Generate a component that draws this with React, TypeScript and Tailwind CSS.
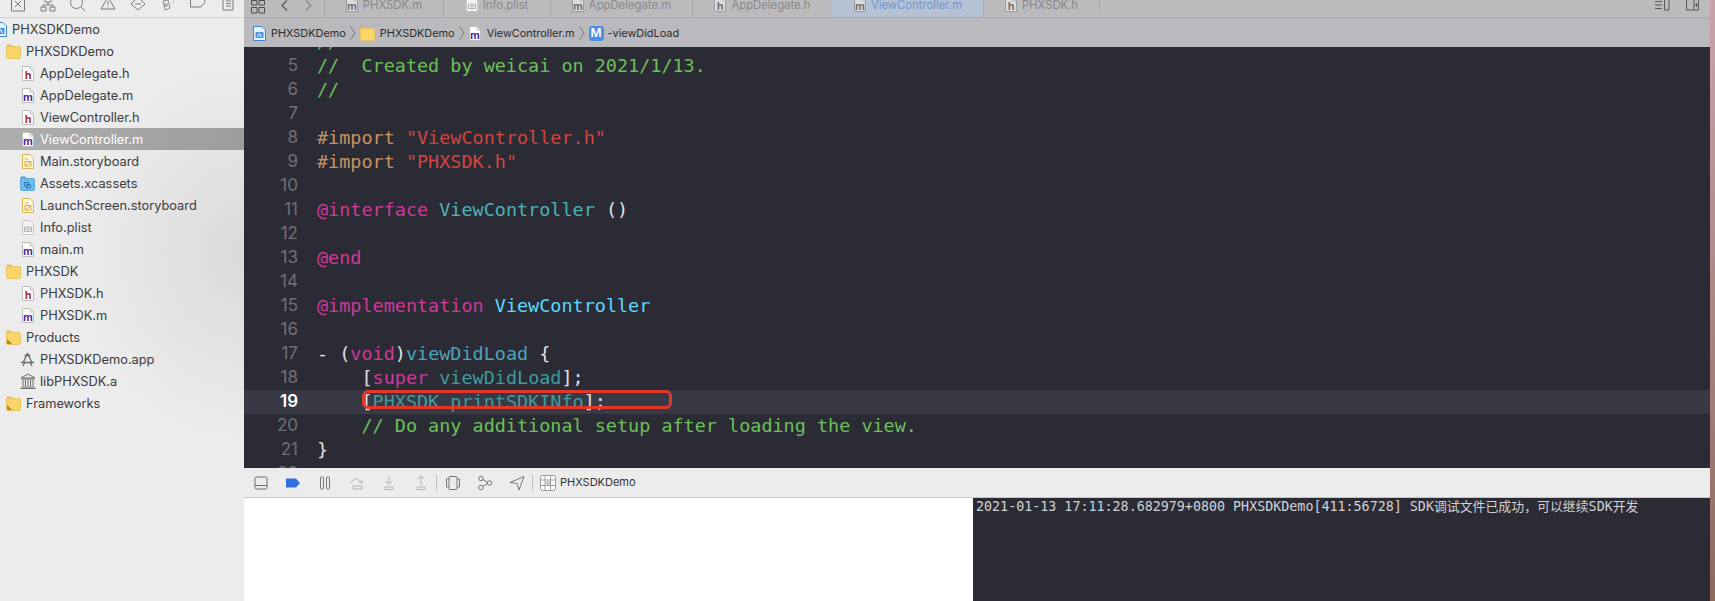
import { ReactNode } from "react";

const sans = "font-['Inter','Noto_Sans',sans-serif]";
const mono = "font-['DejaVu_Sans_Mono','Liberation_Mono',monospace]";

function FileIcon({ letter, dim = false }: { letter: "h" | "m"; dim?: boolean }) {
  const color = dim ? "#6d6d70" : letter === "h" ? "#a3272c" : "#3f2a9b";
  return (
    <svg width="12" height="15" viewBox="0 0 12 15" className="shrink-0">
      <path d="M.5.5H8L11.5 4V14.500H.5Z" fill={dim ? "#dcdcdc" : "#fff"} stroke={dim ? "#9b9b9b" : "#bdbdbd"} />
      <path d="M8 .5V4H11.500" fill="none" stroke="#c4c4c4" />
      <text x="6" y="12.500" textAnchor="middle" fontSize="11" fontWeight="700" fontFamily="Liberation Sans" fill={color}>
        {letter}
      </text>
    </svg>
  );
}

function Storyboard() {
  return (
    <svg width="12" height="15" viewBox="0 0 12 15" className="shrink-0">
      <path d="M.5.5H8L11.500 4V14.500H.5Z" fill="#fdf6df" stroke="#d9b64f" />
      <path d="M3 5h3M3 7.500h6v4.500H3ZM3 12l6-4.500" fill="none" stroke="#e2a92c" />
    </svg>
  );
}

function Plist() {
  return (
    <svg width="12" height="15" viewBox="0 0 12 15" className="shrink-0">
      <path d="M.5.5H8L11.500 4V14.500H.5Z" fill="#f4f4f4" stroke="#c6c6c6" />
      <path d="M2.500 7h7v4.500h-7ZM2.500 9.200h7M6 7v4.500" fill="none" stroke="#b5b5b5" />
    </svg>
  );
}

function Folder({ kind = "plain" }: { kind?: "plain" | "corner" | "blue" }) {
  const fill = kind === "blue" ? "#6cbcec" : "#fbd569";
  const tab = kind === "blue" ? "#4a9fd8" : "#e9b94a";
  return (
    <svg width="15" height="15" viewBox="0 0 15 15" className="shrink-0">
      <path d="M.5 3V1.500Q.5.500 1.500.500H5L6.500 2.500H14V5H.5Z" fill={tab} />
      <rect x=".5" y="2.500" width="14" height="12" rx="1.200" fill={fill} stroke={kind === "blue" ? "#5aa8dc" : "#e5c464"} />
      {kind === "corner" && <path d="M1 14V9L6.500 14Z" fill="#b98a20" />}
      {kind === "blue" && <path d="M4.500 6.500h4v3.500h-4ZM6.500 8.500h4v3.500h-4Z" fill="none" stroke="#1f6fa8" strokeWidth=".8" />}
    </svg>
  );
}

function DocBlue() {
  return (
    <svg width="13" height="15" viewBox="0 0 13 15" className="shrink-0">
      <path d="M.5.500H9L12.500 4V14.500H.5Z" fill="#e6f1fb" stroke="#3f87d6" />
      <path d="M2.500 6h8v6h-8Z" fill="#4c95e0" />
      <path d="M4.500 11L6.500 7.500 8.500 11" fill="none" stroke="#fff" />
    </svg>
  );
}

function AppIcon() {
  return (
    <svg width="15" height="15" viewBox="0 0 15 15" className="shrink-0" fill="none" stroke="#6b6b6d" strokeWidth="1.300">
      <path d="M7.500 1L3 11M7.500 1L12 11M1 10.500h13M3 14l1.500-3M12 14l-1.500-3M4.500 3.500h6" />
    </svg>
  );
}

function Bank() {
  return (
    <svg width="16" height="16" viewBox="0 0 16 16" className="shrink-0" fill="none" stroke="#6b6b6d">
      <path d="M1 5L8 1l7 4ZM1.500 6h13M3 7v6M5.500 7v6M8 7v6M10.500 7v6M13 7v6M1.500 14h13M.5 15.500h15" />
    </svg>
  );
}

type Row = { label: string; indent: number; text: number; icon: ReactNode; selected?: boolean };

const rows: Row[] = [
  { label: "PHXSDKDemo", indent: -6, text: 12, icon: <DocBlue /> },
  { label: "PHXSDKDemo", indent: 6, text: 26, icon: <Folder /> },
  { label: "AppDelegate.h", indent: 22, text: 40, icon: <FileIcon letter="h" /> },
  { label: "AppDelegate.m", indent: 22, text: 40, icon: <FileIcon letter="m" /> },
  { label: "ViewController.h", indent: 22, text: 40, icon: <FileIcon letter="h" /> },
  { label: "ViewController.m", indent: 22, text: 40, icon: <FileIcon letter="m" />, selected: true },
  { label: "Main.storyboard", indent: 22, text: 40, icon: <Storyboard /> },
  { label: "Assets.xcassets", indent: 20, text: 40, icon: <Folder kind="blue" /> },
  { label: "LaunchScreen.storyboard", indent: 22, text: 40, icon: <Storyboard /> },
  { label: "Info.plist", indent: 22, text: 40, icon: <Plist /> },
  { label: "main.m", indent: 22, text: 40, icon: <FileIcon letter="m" /> },
  { label: "PHXSDK", indent: 6, text: 26, icon: <Folder /> },
  { label: "PHXSDK.h", indent: 22, text: 40, icon: <FileIcon letter="h" /> },
  { label: "PHXSDK.m", indent: 22, text: 40, icon: <FileIcon letter="m" /> },
  { label: "Products", indent: 6, text: 26, icon: <Folder kind="corner" /> },
  { label: "PHXSDKDemo.app", indent: 20, text: 40, icon: <AppIcon /> },
  { label: "libPHXSDK.a", indent: 20, text: 40, icon: <Bank /> },
  { label: "Frameworks", indent: 6, text: 26, icon: <Folder kind="corner" /> },
];

function NavigatorIcons() {
  return (
    <div className="flex h-[17px] items-start overflow-hidden pl-[10px] gap-[14px] border-b-0">
      <svg width="16" height="17" viewBox="0 0 16 17" fill="none" stroke="#7a7a7a" className="shrink-0"><path d="M1.500-5h13v16h-13ZM5 1l6 6M11 1L5 7" /></svg>
      <svg width="16" height="17" viewBox="0 0 16 17" fill="none" stroke="#7a7a7a" className="shrink-0"><path d="M5-3h6v5H5ZM8 2v3M3 7V5h10v2M1 7h5v4H1ZM10 7h5v4h-5Z" /></svg>
      <svg width="16" height="17" viewBox="0 0 16 17" fill="none" stroke="#7a7a7a" className="shrink-0"><circle cx="6.500" cy="2.500" r="6" /><path d="M11 7l4 4" /></svg>
      <svg width="16" height="17" viewBox="0 0 16 17" fill="none" stroke="#7a7a7a" className="shrink-0"><path d="M8-3L15 9H1ZM8 1v4M8 6.500v1" /></svg>
      <svg width="16" height="17" viewBox="0 0 16 17" fill="none" stroke="#7a7a7a" className="shrink-0"><path d="M8-3l7 7-7 6-7-6ZM5 4h6" /></svg>
      <svg width="16" height="17" viewBox="0 0 16 17" fill="none" stroke="#8c8c8c" className="shrink-0"><path d="M3 1l5-1 2 8-5 2ZM11-2h1M13 0h1M13 3h1" /><rect x="5" y="4" width="2" height="2" /></svg>
      <svg width="16" height="17" viewBox="0 0 16 17" fill="none" stroke="#7a7a7a" className="shrink-0"><path d="M.5-3H11l4.500 4.500L11 7H.5Z" /></svg>
      <svg width="16" height="17" viewBox="0 0 16 17" fill="none" stroke="#7a7a7a" className="shrink-0"><path d="M3-3h10v13H3ZM6 1h5M6 3.500h5M6 6h5" /></svg>
    </div>
  );
}

function Sidebar() {
  return (
    <aside className={`w-[244px] shrink-0 overflow-hidden bg-[radial-gradient(ellipse_170px_190px_at_100%_42%,#dadada_0%,#ececec_100%)] text-[12.800px] text-[#3b3b3d] ${sans}`}>
      <div className="h-[18px] border-b border-[#d3d3d3]">
        <NavigatorIcons />
      </div>
      {rows.map((r, i) => (
        <div
          key={i}
          className={`flex h-[22px] items-center ${r.selected ? "bg-[linear-gradient(90deg,#aeaeae,#9d9d9d)] text-white" : ""}`}
        >
          <div className="flex w-0 shrink-0 items-center" style={{ marginLeft: r.indent }}>
            {r.icon}
          </div>
          <span className="pt-px" style={{ marginLeft: r.text - r.indent }}>{r.label}</span>
        </div>
      ))}
    </aside>
  );
}

const tabs = [
  { name: "PHXSDK.m", letter: "m", w: "w-[119px]" },
  { name: "Info.plist", letter: "p", w: "w-[107px]" },
  { name: "AppDelegate.m", letter: "m", w: "w-[142px]" },
  { name: "AppDelegate.h", letter: "h", w: "w-[140px]" },
  { name: "ViewController.m", letter: "m", w: "w-[151px]", active: true },
  { name: "PHXSDK.h", letter: "h", w: "w-[116px]" },
];

function TabBar() {
  return (
    <div className={`flex h-[18px] shrink-0 items-start overflow-hidden border-b border-[#a9a9ab] bg-[#bbbabd] text-[11.300px] text-[#88888c] ${sans}`}>
      <div className="flex h-[17px] w-[80px] shrink-0 items-start pl-[7px]">
        <svg width="14" height="14" viewBox="0 0 14 14" fill="none" stroke="#4c4c4e" className="shrink-0">
          <path d="M.5.500h5.500V5H.5ZM8 .500h5.500V5H8ZM.5 7.500h5.500v5.500H.5ZM8 7.500h5.500v5.500H8Z" />
        </svg>
        <svg width="10" height="12" viewBox="0 0 10 12" fill="none" stroke="#59595b" strokeWidth="1.300" className="ml-[15px] shrink-0"><path d="M7 .5L2 5.500 7 10.500" /></svg>
        <svg width="10" height="12" viewBox="0 0 10 12" fill="none" stroke="#86868a" strokeWidth="1.300" className="ml-[13px] shrink-0"><path d="M3 .5L8 5.500 3 10.500" /></svg>
      </div>
      {tabs.map((t) => (
        <div
          key={t.name}
          className={`flex h-[17px] shrink-0 items-start justify-center gap-[5px] border-l ${t.w} ${
            t.active ? "border-transparent bg-[#b6c2d4] text-[#6f95cf]" : "border-[#a9a9ab]"
          }`}
        >
          <div className="-mt-[3px]">{t.letter === "p" ? <Plist /> : <FileIcon letter={t.letter as "h" | "m"} dim />}</div>
          <span className="-mt-[4px] leading-[18px]">{t.name}</span>
        </div>
      ))}
      <div className="h-[10px] border-l border-[#a9a9ab]" />
      <div className="ml-auto flex items-start gap-[16px] pr-[11px]">
        <svg width="16" height="12" viewBox="0 0 16 12" fill="none" stroke="#59595b" className="shrink-0"><path d="M1 1.500h7M1 5h7M1 8.500h7M10.500-1h4.500v11h-4.500Z" /></svg>
        <svg width="13" height="12" viewBox="0 0 13 12" fill="none" stroke="#59595b" className="shrink-0"><path d="M.5-1h12v11H.5ZM8 -1v11M10.500 3v4M8.500 5h4" /></svg>
      </div>
    </div>
  );
}

function Chevron() {
  return (
    <svg width="6" height="14" viewBox="0 0 6 14" fill="none" stroke="#77777a" className="mx-[4px] shrink-0">
      <path d="M.5.5L5 7 .5 13.500" />
    </svg>
  );
}

function Breadcrumb() {
  return (
    <div className={`flex h-[29px] shrink-0 items-center bg-[#bab9bd] pl-[9px] pt-px text-[10.900px] text-[#2b2b2d] ${sans}`}>
      <DocBlue />
      <span className="ml-[5px]">PHXSDKDemo</span>
      <Chevron />
      <Folder />
      <span className="ml-[5px]">PHXSDKDemo</span>
      <Chevron />
      <FileIcon letter="m" />
      <span className="ml-[6px]">ViewController.m</span>
      <Chevron />
      <div className="flex h-[15px] w-[15px] items-center justify-center rounded-[3px] bg-[#4d8fe6] text-[12px] font-semibold text-white">M</div>
      <span className="ml-[4px]">-viewDidLoad</span>
    </div>
  );
}

type Tok = [string, string];

const cComment = "text-[#6cc05a]";
const cPre = "text-[#c8925f]";
const cStr = "text-[#d4453e]";
const cKey = "text-[#cf3a96]";
const cCls = "text-[#4db3b8]";
const cBright = "text-[#5dd8ff]";
const cDecl = "text-[#4fa3ba]";
const cCall = "text-[#3f9c9e]";
const cPlain = "text-[#e2e2e4]";

const lines: { n: number; toks: Tok[] }[] = [
  { n: 4, toks: [["//", cComment]] },
  { n: 5, toks: [["//  Created by weicai on 2021/1/13.", cComment]] },
  { n: 6, toks: [["//", cComment]] },
  { n: 7, toks: [] },
  { n: 8, toks: [["#import ", cPre], ['"ViewController.h"', cStr]] },
  { n: 9, toks: [["#import ", cPre], ['"PHXSDK.h"', cStr]] },
  { n: 10, toks: [] },
  { n: 11, toks: [["@interface", cKey], [" ", cPlain], ["ViewController", cCls], [" ()", cPlain]] },
  { n: 12, toks: [] },
  { n: 13, toks: [["@end", cKey]] },
  { n: 14, toks: [] },
  { n: 15, toks: [["@implementation", cKey], [" ", cPlain], ["ViewController", cBright]] },
  { n: 16, toks: [] },
  { n: 17, toks: [["- (", cPlain], ["void", cKey], [")", cPlain], ["viewDidLoad", cDecl], [" {", cPlain]] },
  { n: 18, toks: [["    [", cPlain], ["super", cKey], [" ", cPlain], ["viewDidLoad", cCall], ["];", cPlain]] },
  { n: 19, toks: [["    [", cPlain], ["PHXSDK printSDKINfo", cCall], ["];", cPlain]] },
  { n: 20, toks: [["    // Do any additional setup after loading the view.", cComment]] },
  { n: 21, toks: [["}", cPlain]] },
  { n: 22, toks: [] },
];

function Editor() {
  return (
    <div className="relative h-[421px] shrink-0 overflow-hidden bg-[#2b2b35]">
      <div className="-mt-[17px]">
        {lines.map((l) => (
          <div key={l.n} className={`flex h-[24px] items-center ${l.n === 19 ? "bg-[#383945]" : ""}`}>
            <div
              className={`w-[54px] shrink-0 text-right text-[17px] ${sans} ${
                l.n === 19 ? "font-semibold text-white" : "text-[#6f7078]"
              }`}
            >
              {l.n}
            </div>
            <div className={`ml-[19px] whitespace-pre text-[18.470px] ${mono}`}>
              {l.toks.map((t, i) => (
                <span key={i} className={t[1]}>
                  {t[0]}
                </span>
              ))}
            </div>
          </div>
        ))}
      </div>
      {/* annotation drawn over the screenshot */}
      <div className="absolute left-[118px] top-[343px] h-[19px] w-[310px] rounded-[6px] border-[3px] border-[#e0392b]" />
    </div>
  );
}

const iconCls = "h-4 w-4 shrink-0";

function DebugBar() {
  return (
    <div className={`flex h-[30px] shrink-0 items-center gap-[16px] border-b border-[#c9c9c9] bg-[#ececec] pl-[9px] text-[11px] text-[#333335] ${sans}`}>
      <svg viewBox="0 0 16 16" fill="none" stroke="#6b6b6d" className={iconCls}><rect x="2" y="2" width="12" height="12" rx="1.500" /><path d="M2 10.500h12" /></svg>
      <svg viewBox="0 0 16 16" className={iconCls}><path d="M1 3.500h10L15 8l-4 4.500H1Z" fill="#2f6fe0" /></svg>
      <svg viewBox="0 0 16 16" fill="none" stroke="#77777a" className={iconCls}><rect x="3.500" y="2" width="3" height="12" rx="1" /><rect x="9.500" y="2" width="3" height="12" rx="1" /></svg>
      <svg viewBox="0 0 16 16" fill="none" stroke="#b4b4b4" className={iconCls}><path d="M1 8l6-5 5 4M13 5v3h-3M4 11h9v3H4Z" /></svg>
      <svg viewBox="0 0 16 16" fill="none" stroke="#b4b4b4" className={iconCls}><path d="M8 1v8M5 6l3 3 3-3M4 12h8v2.500H4Z" /></svg>
      <svg viewBox="0 0 16 16" fill="none" stroke="#b4b4b4" className={iconCls}><path d="M8 10V1M5 4l3-3 3 3M4 12h8v2.500H4Z" /></svg>
      <div className="-ml-[9px] -mr-[8px] h-[16px] w-px shrink-0 bg-[#bdbdbd]" />
      <svg viewBox="0 0 16 16" fill="none" stroke="#77777a" className={iconCls}><rect x="4" y="1.500" width="8" height="13" rx="1" /><path d="M4 4H1.500v8H4M12 4h2.500v8H12" /></svg>
      <svg viewBox="0 0 16 16" fill="none" stroke="#77777a" className={iconCls}><circle cx="4" cy="3.500" r="2.200" /><circle cx="4" cy="12.500" r="2.200" /><circle cx="12.500" cy="8" r="2.200" /><path d="M6 4.500L10.500 7.500M6 11.500l4.500-3" /></svg>
      <svg viewBox="0 0 16 16" fill="none" stroke="#77777a" className={iconCls}><path d="M15 1.500L1 7.500l7 1 2 6.500Z" /></svg>
      <div className="-mx-[9px] h-[16px] w-px shrink-0 bg-[#bdbdbd]" />
      <div className="flex items-center gap-[4px]">
        <svg width="16" height="16" viewBox="0 0 16 16" fill="#fff" stroke="#9c9c9e" className="shrink-0"><rect x=".5" y=".5" width="15" height="15" rx="2" /><path d="M.5 5h15M.5 10.500h15M5 .5v15M10.500 .5v15" /><circle cx="8" cy="8" r="1.500" /></svg>
        <span>PHXSDKDemo</span>
      </div>
    </div>
  );
}

function Console() {
  return (
    <div className="flex min-h-0 flex-1">
      <div className="w-[729px] shrink-0 bg-white" />
      <div className="flex-1 bg-[#2b2b35] pl-[3px]">
        <div className="whitespace-pre text-[13.350px] leading-[18px] text-[#d2d2d6] font-['DejaVu_Sans_Mono','Noto_Sans_CJK_SC',monospace]">
          2021-01-13 17:11:28.682979+0800 PHXSDKDemo[411:56728] SDK<span className="text-[12.900px]">调试文件已成功，可以继续</span>SDK<span className="text-[12.900px]">开发</span>
        </div>
      </div>
    </div>
  );
}

export default function App() {
  return (
    <div className="flex h-[601px] w-[1715px] overflow-hidden">
      <Sidebar />
      <main className="flex w-[1466px] shrink-0 flex-col">
        <TabBar />
        <Breadcrumb />
        <Editor />
        <DebugBar />
        <Console />
      </main>
      <div className="w-[5px] shrink-0 bg-[linear-gradient(180deg,#c9a3ab,#8c6a5e)]" />
    </div>
  );
}
